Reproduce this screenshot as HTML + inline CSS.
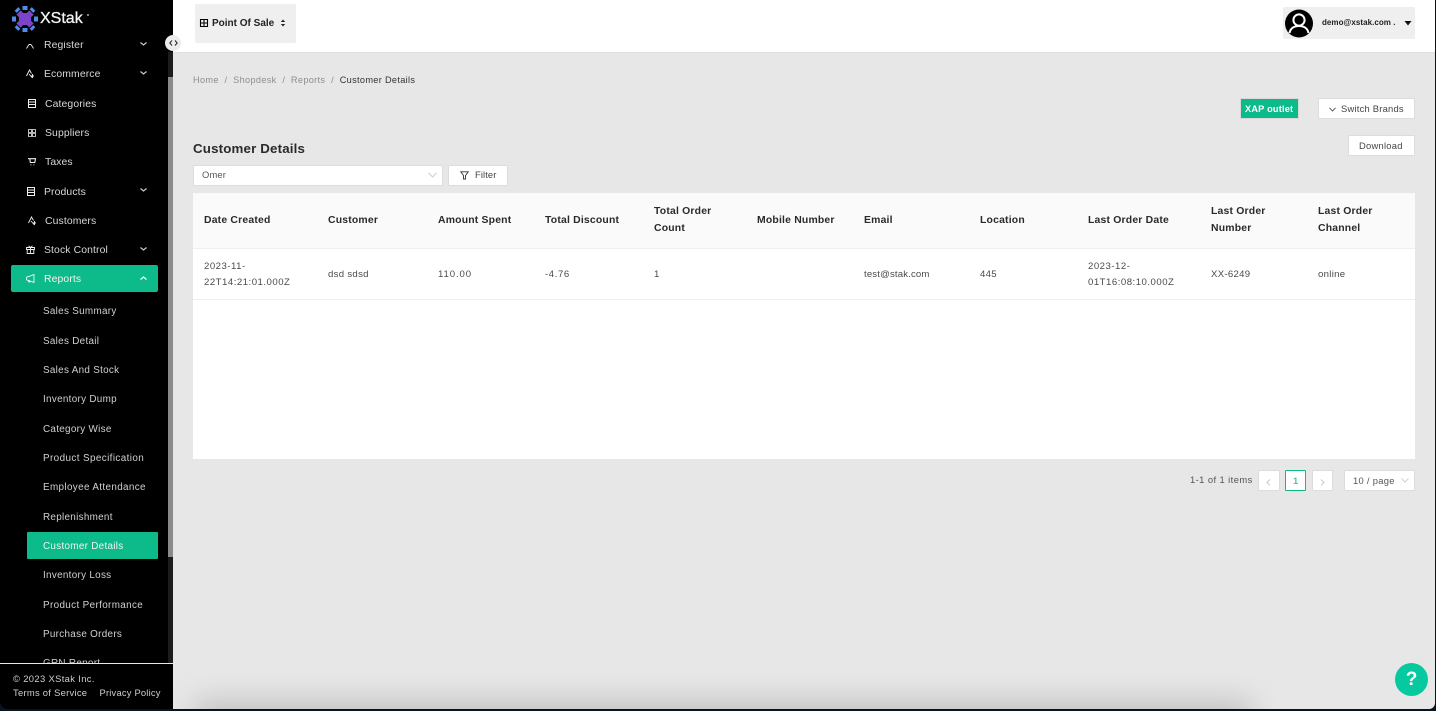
<!DOCTYPE html>
<html><head><meta charset="utf-8"><style>
html,body{margin:0;padding:0;width:1436px;height:711px;overflow:hidden;background:#0a1420}
*{box-sizing:border-box}
body{font-family:"Liberation Sans",sans-serif;position:relative}
.t{position:absolute;white-space:nowrap;line-height:14px;height:14px}
.b{position:absolute}
#main{position:absolute;left:173px;top:0;width:1262px;height:709px;background:#e7e7e7;overflow:hidden;border-bottom-right-radius:6px}
#side{position:absolute;left:0;top:0;width:173px;height:709px;background:#000;border-bottom-left-radius:8px;overflow:hidden}
.m{color:#d8d8d8;font-size:10.4px;letter-spacing:.12px}
.s{color:#d0d0d0;font-size:9.9px;letter-spacing:.3px}
.h{color:#2a2a2a;font-size:10.4px;font-weight:bold;letter-spacing:.2px}
.c{color:#4a4a4a;font-size:9.6px;letter-spacing:.3px}
.n{letter-spacing:.5px}
.btn{position:absolute;background:#fff;border:1px solid #dcdcdc;border-radius:1px}
svg{position:absolute;overflow:visible}
</style></head><body>
<div id="main">
 <div class="b" style="left:0;top:0;width:1263px;height:53px;background:#fff;border-bottom:1px solid #e0e0e0"></div>
 <div class="b" style="left:22px;top:4px;width:101px;height:39px;background:#efefef;border-radius:2px"></div>
 <svg style="left:27px;top:19px" width="8" height="8" viewBox="0 0 8 8"><path d="M.5.5h7v7h-7zM4 .5v7M.5 4h7" fill="none" stroke="#000" stroke-width="1.1"/></svg>
 <div class="t" style="left:39px;top:17px;font-size:10px;font-weight:bold;color:#222;letter-spacing:0">Point Of Sale</div>
 <svg style="left:107px;top:19px" width="6" height="8" viewBox="0 0 6 8"><path d="M3 .5L5.200 3H.8zM3 7.500L.8 5h4.400z" fill="#222"/></svg>
 <div class="b" style="left:1110px;top:7px;width:132px;height:32px;background:#efefef;border-radius:2px"></div>
 <svg style="left:1112px;top:9px" width="28" height="29" viewBox="0 0 28 29"><circle cx="14" cy="14.500" r="14" fill="#000"/><circle cx="14" cy="11" r="5.600" fill="none" stroke="#fff" stroke-width="2"/><path d="M4.500 24c1-5 5-7 9.500-7s8.500 2 9.500 7" fill="none" stroke="#fff" stroke-width="2"/></svg>
 <div class="t" style="left:1149px;top:16px;font-size:8px;font-weight:bold;color:#222;letter-spacing:.05px">demo@xstak.com .</div>
 <svg style="left:1231px;top:21px" width="8" height="5" viewBox="0 0 8 5"><path d="M.5 0h7L4 4.500z" fill="#111"/></svg>

 <div class="t" style="left:20px;top:73px;font-size:9.200px;letter-spacing:.32px;color:#8e8e8e">Home&nbsp;&nbsp;/&nbsp;&nbsp;Shopdesk&nbsp;&nbsp;/&nbsp;&nbsp;Reports&nbsp;&nbsp;/&nbsp;&nbsp;<span style="color:#333">Customer Details</span></div>

 <div class="b" style="left:1067px;top:98px;width:59px;height:21px;background:#0dbb8a;border:1px solid #d8d8d8"></div>
 <div class="t" style="left:1072px;top:102px;font-size:9.200px;font-weight:bold;color:#fff;letter-spacing:.2px">XAP outlet</div>
 <div class="btn" style="left:1145px;top:98px;width:97px;height:21px"></div>
 <svg style="left:1156px;top:107px" width="7" height="5" viewBox="0 0 7 5"><path d="M.5.800L3.500 4 6.500.800" fill="none" stroke="#444" stroke-width=".8"/></svg>
 <div class="t" style="left:1168px;top:102px;font-size:9.400px;color:#444;letter-spacing:.22px">Switch Brands</div>
 <div class="btn" style="left:1175px;top:135px;width:67px;height:21px"></div>
 <div class="t" style="left:1186px;top:139px;font-size:9.400px;color:#444;letter-spacing:.25px">Download</div>

 <div class="t" style="left:20px;top:142px;font-size:13.300px;font-weight:bold;color:#2a2a2a;letter-spacing:.17px">Customer Details</div>
 <div class="btn" style="left:20px;top:165px;width:250px;height:21px"></div>
 <div class="t" style="left:29px;top:168px;font-size:9.400px;color:#555;letter-spacing:.15px">Omer</div>
 <svg style="left:255px;top:172px" width="9" height="6" viewBox="0 0 9 6"><path d="M.5 .800L4.500 5 8.500 .800" fill="none" stroke="#c4c4c4" stroke-width=".8"/></svg>
 <div class="btn" style="left:275px;top:165px;width:60px;height:21px"></div>
 <svg style="left:287px;top:171px" width="9" height="9" viewBox="0 0 9 9"><path d="M.8.800h7.400L5.500 4.500V8h-2V4.500z" fill="none" stroke="#333" stroke-width=".9"/></svg>
 <div class="t" style="left:302px;top:168px;font-size:9.400px;color:#444;letter-spacing:.1px">Filter</div>

 <div class="b" style="left:20px;top:193px;width:1222px;height:266px;background:#fff"></div>
 <div class="b" style="left:20px;top:193px;width:1222px;height:56px;background:#fafafa;border-bottom:1px solid #efefef"></div>
 <div class="b" style="left:20px;top:299px;width:1222px;height:1px;background:#efefef"></div>

 <div class="t h" style="left:31px;top:214px">Date Created</div>
 <div class="t h" style="left:155px;top:214px">Customer</div>
 <div class="t h" style="left:265px;top:214px">Amount Spent</div>
 <div class="t h" style="left:372px;top:214px">Total Discount</div>
 <div class="t h" style="left:481px;top:205px">Total Order</div>
 <div class="t h" style="left:481px;top:222px">Count</div>
 <div class="t h" style="left:584px;top:214px">Mobile Number</div>
 <div class="t h" style="left:691px;top:214px">Email</div>
 <div class="t h" style="left:807px;top:214px">Location</div>
 <div class="t h" style="left:915px;top:214px">Last Order Date</div>
 <div class="t h" style="left:1038px;top:205px">Last Order</div>
 <div class="t h" style="left:1038px;top:222px">Number</div>
 <div class="t h" style="left:1145px;top:205px">Last Order</div>
 <div class="t h" style="left:1145px;top:222px">Channel</div>

 <div class="t c n" style="left:31px;top:260px">2023-11-</div>
 <div class="t c n" style="left:31px;top:276px">22T14:21:01.000Z</div>
 <div class="t c" style="left:155px;top:268px">dsd sdsd</div>
 <div class="t c n" style="left:265px;top:268px;letter-spacing:.9px">110.00</div>
 <div class="t c n" style="left:372px;top:268px;letter-spacing:.6px">-4.76</div>
 <div class="t c" style="left:481px;top:268px">1</div>
 <div class="t c" style="left:691px;top:268px;letter-spacing:.15px">test@stak.com</div>
 <div class="t c" style="left:807px;top:268px">445</div>
 <div class="t c n" style="left:915px;top:260px">2023-12-</div>
 <div class="t c n" style="left:915px;top:276px">01T16:08:10.000Z</div>
 <div class="t c" style="left:1038px;top:268px">XX-6249</div>
 <div class="t c" style="left:1145px;top:268px">online</div>

 <div class="t" style="left:1017px;top:473px;font-size:9.400px;color:#555;letter-spacing:.42px">1-1 of 1 items</div>
 <div class="btn" style="left:1085px;top:470px;width:22px;height:21px"></div>
 <svg style="left:1093px;top:479px" width="5" height="7" viewBox="0 0 5 7"><path d="M4 .5L1 3.500 4 6.500" fill="none" stroke="#bbb" stroke-width=".8"/></svg>
 <div class="b" style="left:1112px;top:470px;width:21px;height:21px;background:#fff;border:1px solid #0dbb8a;border-radius:1px"></div>
 <div class="t" style="left:1120px;top:474px;font-size:9.400px;font-weight:bold;color:#42cba5">1</div>
 <div class="btn" style="left:1139px;top:470px;width:21px;height:21px"></div>
 <svg style="left:1147px;top:479px" width="5" height="7" viewBox="0 0 5 7"><path d="M1 .5L4 3.500 1 6.500" fill="none" stroke="#bbb" stroke-width=".8"/></svg>
 <div class="btn" style="left:1171px;top:470px;width:71px;height:21px"></div>
 <div class="t" style="left:1180px;top:474px;font-size:9.400px;color:#555;letter-spacing:.3px">10 / page</div>
 <svg style="left:1228px;top:478px" width="8" height="5" viewBox="0 0 8 5"><path d="M.5.500L4 4.200 7.500.500" fill="none" stroke="#c4c4c4" stroke-width=".8"/></svg>

 <div class="b" style="left:30px;top:709px;width:1040px;height:30px;box-shadow:0 0 30px 8px rgba(0,0,0,.17)"></div>
 <div class="b" style="left:1222px;top:663px;width:33px;height:33px;border-radius:50%;background:#06c9a0;color:#fff;font-weight:bold;font-size:19px;line-height:33px;text-align:center">?</div>
</div>

<div id="side">
 <div class="t m" style="left:44px;top:39px">Register</div>
 <div class="b" style="left:0;top:0;width:173px;height:41px;background:#000"></div>
 <svg style="left:12px;top:6px" width="26" height="26" viewBox="0 0 26 26">
  <path d="M7 7h12v12H7z" fill="#7a45c9"/>
  <path d="M6.500 6.500L19.500 19.500M19.500 6.500L6.500 19.500" stroke="#7a45c9" stroke-width="6"/>
  <g fill="#4d8fe8"><rect x="10.500" y="0" width="5" height="4"/><rect x="10.500" y="22" width="5" height="4"/><rect x="0" y="10.500" width="4" height="5"/><rect x="22" y="10.500" width="4" height="5"/><rect x="3" y="2.500" width="5" height="3" transform="rotate(-45 5.500 4)"/><rect x="18" y="2.500" width="5" height="3" transform="rotate(45 20.500 4)"/><rect x="3" y="20.500" width="5" height="3" transform="rotate(45 5.500 22)"/><rect x="18" y="20.500" width="5" height="3" transform="rotate(-45 20.500 22)"/></g>
 </svg>
 <div class="t" style="left:40px;top:9px;height:19px;line-height:19px;font-size:16px;color:#f4f4f4;letter-spacing:0;-webkit-text-stroke:.3px #f4f4f4">XStak</div>
 <div class="b" style="left:87px;top:14px;width:2px;height:2px;border-radius:50%;background:#aaa"></div>

 <div class="t m" style="left:44px;top:68px">Ecommerce</div>
 <div class="t m" style="left:45px;top:98px">Categories</div>
 <div class="t m" style="left:45px;top:127px">Suppliers</div>
 <div class="t m" style="left:45px;top:156px">Taxes</div>
 <div class="t m" style="left:44px;top:186px">Products</div>
 <div class="t m" style="left:45px;top:215px">Customers</div>
 <div class="t m" style="left:44px;top:244px">Stock Control</div>
 <div class="b" style="left:11px;top:265px;width:147px;height:27px;background:#0dbb8a;border-radius:2px"></div>
 <div class="t m" style="left:44px;top:273px;color:#f2f2f2">Reports</div>

 <svg style="left:26px;top:41px" width="8" height="8" viewBox="0 0 8 8"><path d="M.5 7.500L3 3.500M7.500 7.500L5 3.500M3 3.500h2" fill="none" stroke="#eee" stroke-width=".9"/></svg>
 <svg style="left:26px;top:69px" width="9" height="10" viewBox="0 0 9 10"><path d="M.5 7L3.500 1l2 3.500M3 5l3.500 4M6.500 5v4M5 7h3" fill="none" stroke="#eee" stroke-width=".9"/></svg>
 <svg style="left:28px;top:99px" width="8" height="9" viewBox="0 0 8 9"><path d="M.5.500h7v8h-7zM.5 3h7M.5 5.500h7" fill="none" stroke="#eee" stroke-width="1"/></svg>
 <svg style="left:28px;top:129px" width="8" height="8" viewBox="0 0 8 8"><path d="M.5.500h3v3h-3zM4.500.500h3v3h-3zM.5 4.500h3v3h-3zM4.500 4.500h3v3h-3z" fill="none" stroke="#eee" stroke-width=".8"/></svg>
 <svg style="left:28px;top:158px" width="8" height="8" viewBox="0 0 8 8"><path d="M0 .7h7.500L6.800 4.500H2.300L1.800.7M2.500 6.800h.8M5.500 6.800h.8" fill="none" stroke="#eee" stroke-width="1.100"/></svg>
 <svg style="left:27px;top:187px" width="8" height="9" viewBox="0 0 8 9"><path d="M.5.500h7v8h-7zM.5 3h7M.5 5.500h7" fill="none" stroke="#eee" stroke-width="1"/></svg>
 <svg style="left:28px;top:216px" width="9" height="10" viewBox="0 0 9 10"><path d="M.5 7L3.500 1l2 3.500M3 5l3.500 4M6.500 5v4M5 7h3" fill="none" stroke="#eee" stroke-width=".9"/></svg>
 <svg style="left:26px;top:245px" width="9" height="9" viewBox="0 0 9 9"><path d="M.5 2.500h8v2h-8zM1.200 4.500v4h6.600v-4M4.500 2.500v6M2.500.8l2 1.700 2-1.700" fill="none" stroke="#eee" stroke-width=".9"/></svg>
 <svg style="left:26px;top:274px" width="9" height="9" viewBox="0 0 9 9"><path d="M.5 3.200L8 .6v7.800L.5 5.800zM2.300 6l.5 2h1l-.4-1.600" fill="none" stroke="#fff" stroke-width=".8"/></svg>

 <svg style="left:140px;top:42px" width="7" height="4" viewBox="0 0 7 4"><path d="M.5.500L3.500 3l3-2.500" fill="none" stroke="#ccc" stroke-width="1.200"/></svg>
 <svg style="left:140px;top:71px" width="7" height="4" viewBox="0 0 7 4"><path d="M.5.500L3.500 3l3-2.500" fill="none" stroke="#ccc" stroke-width="1.200"/></svg>
 <svg style="left:140px;top:188px" width="7" height="4" viewBox="0 0 7 4"><path d="M.5.500L3.500 3l3-2.500" fill="none" stroke="#ccc" stroke-width="1.200"/></svg>
 <svg style="left:140px;top:247px" width="7" height="4" viewBox="0 0 7 4"><path d="M.5.500L3.500 3l3-2.500" fill="none" stroke="#ccc" stroke-width="1.200"/></svg>
 <svg style="left:140px;top:276px" width="7" height="4" viewBox="0 0 7 4"><path d="M.5 3.500L3.500 1l3 2.500" fill="none" stroke="#fff" stroke-width="1.200"/></svg>

 <div class="t s" style="left:43px;top:305px">Sales Summary</div>
 <div class="t s" style="left:43px;top:335px">Sales Detail</div>
 <div class="t s" style="left:43px;top:364px">Sales And Stock</div>
 <div class="t s" style="left:43px;top:393px">Inventory Dump</div>
 <div class="t s" style="left:43px;top:423px">Category Wise</div>
 <div class="t s" style="left:43px;top:452px;letter-spacing:.4px">Product Specification</div>
 <div class="t s" style="left:43px;top:481px;letter-spacing:.36px">Employee Attendance</div>
 <div class="t s" style="left:43px;top:511px">Replenishment</div>
 <div class="b" style="left:27px;top:532px;width:131px;height:27px;background:#0dbb8a;border-radius:1px"></div>
 <div class="t s" style="left:43px;top:540px;color:#f4f4f4">Customer Details</div>
 <div class="t s" style="left:43px;top:569px">Inventory Loss</div>
 <div class="t s" style="left:43px;top:599px;letter-spacing:.36px">Product Performance</div>
 <div class="t s" style="left:43px;top:628px">Purchase Orders</div>
 <div class="t s" style="left:43px;top:657px">GRN Report</div>

 <div class="b" style="left:168px;top:52px;width:5px;height:611px;background:#1c1c1c"></div>
 <div class="b" style="left:168px;top:77px;width:5px;height:480px;background:#8a8a8a"></div>

 <div class="b" style="left:0;top:663px;width:173px;height:46px;background:#000;border-top:1px solid #e8e8e8"></div>
 <div class="t" style="left:13px;top:672px;font-size:9.400px;color:#cfcfcf;letter-spacing:.36px">© 2023 XStak Inc.</div>
 <div class="t" style="left:13px;top:686px;font-size:9.400px;color:#cfcfcf;letter-spacing:.28px">Terms of Service</div>
 <div class="t" style="left:99.500px;top:686px;font-size:9.400px;color:#cfcfcf;letter-spacing:.2px">Privacy Policy</div>
</div>

<div class="b" style="left:165px;top:35px;width:16px;height:16px;border-radius:50%;background:#ececec"></div>
<svg style="left:169px;top:40px" width="9" height="6" viewBox="0 0 9 6"><path d="M3 .5L.8 3 3 5.500M6 .5L8.200 3 6 5.500" fill="none" stroke="#222" stroke-width="1"/></svg>
</body></html>
